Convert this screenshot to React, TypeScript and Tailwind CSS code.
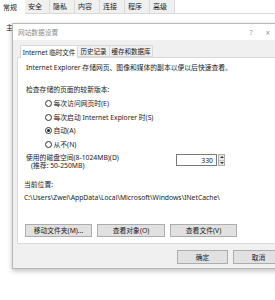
const bgTabs = ["常规", "安全", "隐私", "内容", "连接", "程序", "高级"];

const Radio = ({ label, checked }: { label: string; checked?: boolean }) => (
  <div className="flex h-[13.5px] items-center pl-[19px]">
    <span className="flex h-[7px] w-[7px] items-center justify-center rounded-full border border-[#333] bg-white">
      {checked && <span className="h-[3px] w-[3px] rounded-full bg-[#222]" />}
    </span>
    <span className="ml-[1.5px]">{label}</span>
  </div>
);

const Btn = ({ label, className = "" }: { label: string; className?: string }) => (
  <div
    className={
      "flex h-[13px] items-center justify-center border border-[#adadad] bg-[#e1e1e1] " +
      className
    }
  >
    {label}
  </div>
);

const App = () => {
  return (
    <div className="relative h-[300px] w-[275px] overflow-hidden bg-white font-[family-name:Noto_Sans,Noto_Sans_CJK_SC,sans-serif] text-[6.8px] leading-[9px] text-[#1a1a1a]">
      {/* background window: tab strip */}
      <div className="flex h-[14px] border-b border-[#d9d9d9]">
        {bgTabs.map((t, i) => (
          <div
            key={t}
            className={
              i === 0
                ? "-mb-px flex w-[25px] items-center bg-white pl-[3px] text-[7px]"
                : "flex w-[25px] items-center border-r border-[#d9d9d9] bg-[#f0f0f0] pl-[3px] text-[7px]"
            }
          >
            {t}
          </div>
        ))}
      </div>
      <div className="pl-[6px] pt-[9px] text-[7px]">主页</div>

      {/* dialog */}
      <div className="absolute left-[12px] top-[23px] w-[290px] border border-[#b9b9b9] bg-[#f0f0f0] shadow-[0_2px_5px_rgba(0,0,0,0.25)]">
        {/* title bar */}
        <div className="flex h-[16px] items-center bg-white pl-[5px] text-[#8c8c8c]">
          <span className="text-[6.7px]">网站数据设置</span>
          <span className="ml-auto mr-[13px] text-[7px] text-[#9a9a9a]">?</span>
          <span className="mr-[31px] text-[8px] text-[#9a9a9a]">×</span>
        </div>

        <div className="pl-[4px] pt-[5px]">
          {/* inner tabs */}
          <div className="flex h-[12px] whitespace-nowrap pl-[3px] text-[6.5px]">
            <div className="relative z-10 -mb-px flex w-[58px] items-center justify-center border border-b-0 border-[#d9d9d9] bg-white">
              Internet 临时文件
            </div>
            <div className="flex w-[32px] items-center justify-center border-y border-r border-[#d9d9d9] bg-[#f0f0f0]">
              历史记录
            </div>
            <div className="flex w-[43px] items-center justify-center border-y border-r border-[#d9d9d9] bg-[#f0f0f0]">
              缓存和数据库
            </div>
          </div>

          {/* panel */}
          <div className="h-[187px] border border-[#d9d9d9] bg-white pl-[8px] pt-[5px]">
            <div className="h-[9px]">Internet Explorer 存储网页、图像和媒体的副本以便以后快速查看。</div>
            <div className="mt-[13px] h-[9px]">检查存储的页面的较新版本:</div>
            <div className="mt-[3px]">
              <Radio label="每次访问网页时(E)" />
              <Radio label="每次启动 Internet Explorer 时(S)" />
              <Radio label="自动(A)" checked />
              <Radio label="从不(N)" />
            </div>

            <div className="mt-[3px] flex">
              <div className="w-[150px] leading-[8px]">
                <div>使用的磁盘空间(8-1024MB)(D)</div>
                <div className="pl-[5px]">(推荐: 50-250MB)</div>
              </div>
              <div className="flex h-[12px]">
                <div className="flex w-[41px] items-center justify-end border border-[#7a7a7a] pr-[3px]">330</div>
                <div className="ml-px flex w-[7px] flex-col border border-[#adadad] bg-[#e8e8e8]">
                  <div className="flex flex-1 items-center justify-center border-b border-[#c0c0c0]">
                    <svg width="4" height="2" viewBox="0 0 4 2">
                      <path d="M0 2 L2 0 L4 2 Z" fill="#333" />
                    </svg>
                  </div>
                  <div className="flex flex-1 items-center justify-center">
                    <svg width="4" height="2" viewBox="0 0 4 2">
                      <path d="M0 0 L2 2 L4 0 Z" fill="#333" />
                    </svg>
                  </div>
                </div>
              </div>
            </div>

            <div className="-ml-[2px] mt-[9.5px] h-[9px]">当前位置:</div>
            <div className="-ml-[2px] mt-[4px] h-[9px]">C:\Users\Zwei\AppData\Local\Microsoft\Windows\INetCache\</div>

            <div className="-ml-[1px] mt-[22.5px] flex gap-[5px]">
              <Btn label="移动文件夹(M)..." className="w-[67px]" />
              <Btn label="查看对象(O)" className="w-[68px]" />
              <Btn label="查看文件(V)" className="w-[67px]" />
            </div>
          </div>
        </div>

        {/* bottom buttons */}
        <div className="flex gap-[5px] pb-[4px] pl-[164px] pt-[6px]">
          <Btn label="确定" className="h-[14px] w-[51px]" />
          <Btn label="取消" className="h-[14px] w-[51px]" />
        </div>
      </div>
    </div>
  );
};

export default App;
